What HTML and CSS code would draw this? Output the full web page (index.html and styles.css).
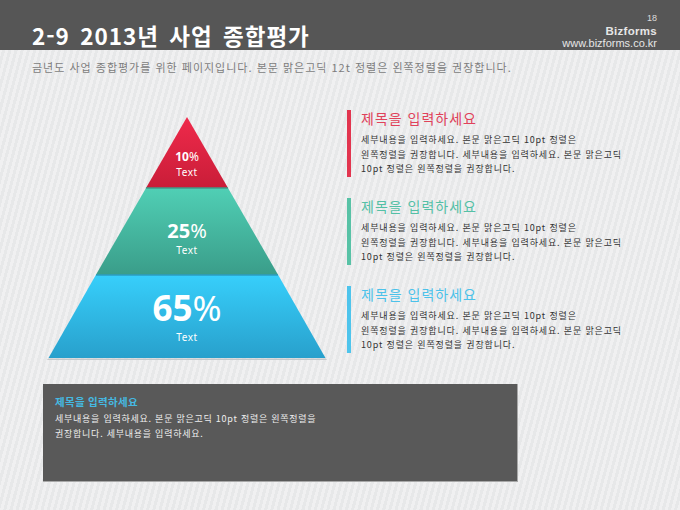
FILE: index.html
```html
<!DOCTYPE html>
<html lang="ko">
<head>
<meta charset="utf-8">
<link rel="stylesheet" href="styles.css">
</head>
<body>
<div class="page">
  <header class="header">
    <h1 class="title">2-9 2013년 사업 종합평가</h1>
    <div class="brand">
      <div class="pageno">18</div>
      <div class="bizname">Bizforms</div>
      <div class="bizurl">www.bizforms.co.kr</div>
    </div>
  </header>
  <p class="subtitle">금년도 사업 종합평가를 위한 페이지입니다. 본문 맑은고딕 12t 정렬은 왼쪽정렬을 권장합니다.</p>
  <div class="main">
    <svg class="pyramid" width="300" height="260" viewBox="0 0 300 260">
      <defs>
        <linearGradient id="gRed" x1="0" y1="0" x2="0" y2="1">
          <stop offset="0" stop-color="#ef2a4b"/>
          <stop offset="1" stop-color="#c91d38"/>
        </linearGradient>
        <linearGradient id="gTeal" x1="0" y1="0" x2="0" y2="1">
          <stop offset="0" stop-color="#50cfb5"/>
          <stop offset="1" stop-color="#3a9d89"/>
        </linearGradient>
        <linearGradient id="gBlue" x1="0" y1="0" x2="0" y2="1">
          <stop offset="0" stop-color="#37cffb"/>
          <stop offset="1" stop-color="#28a0cc"/>
        </linearGradient>
      </defs>
      <polygon points="8,248.5 286,248.5 287,250 7,250" fill="#c5c9cc"/>
      <polygon points="147,7 188,78 106,78" fill="url(#gRed)"/>
      <polygon points="106,78 188,78 238.2,165 55.8,165" fill="url(#gTeal)"/>
      <polygon points="55.8,165 238.2,165 285.5,248 8.5,248" fill="url(#gBlue)"/>
      <line x1="106" y1="78" x2="188" y2="78" stroke="#3f9a88" stroke-width="1.5"/>
      <line x1="56" y1="165" x2="238" y2="165" stroke="#2c9cc0" stroke-width="1.5"/>
      <g class="ptext" fill="#ffffff" text-anchor="middle">
        <text x="147" y="51" class="p10">10<tspan class="pct">%</tspan></text>
        <text x="147" y="66" class="plabel">Text</text>
        <text x="147" y="128" class="p25">25<tspan class="pct">%</tspan></text>
        <text x="147" y="144" class="plabel">Text</text>
        <text x="147" y="211" class="p65">65<tspan class="pct">%</tspan></text>
        <text x="147" y="231" class="plabel">Text</text>
      </g>
    </svg>
    <div class="items">
      <div class="item item-red">
        <div class="item-title">제목을 입력하세요</div>
        <div class="item-body">세부내용을 입력하세요. 본문 맑은고딕 10pt 정렬은<br>왼쪽정렬을 권장합니다. 세부내용을 입력하세요. 본문 맑은고딕<br>10pt 정렬은 왼쪽정렬을 권장합니다.</div>
      </div>
      <div class="item item-teal">
        <div class="item-title">제목을 입력하세요</div>
        <div class="item-body">세부내용을 입력하세요. 본문 맑은고딕 10pt 정렬은<br>왼쪽정렬을 권장합니다. 세부내용을 입력하세요. 본문 맑은고딕<br>10pt 정렬은 왼쪽정렬을 권장합니다.</div>
      </div>
      <div class="item item-blue">
        <div class="item-title">제목을 입력하세요</div>
        <div class="item-body">세부내용을 입력하세요. 본문 맑은고딕 10pt 정렬은<br>왼쪽정렬을 권장합니다. 세부내용을 입력하세요. 본문 맑은고딕<br>10pt 정렬은 왼쪽정렬을 권장합니다.</div>
      </div>
    </div>
  </div>
  <div class="note">
    <div class="note-title">제목을 입력하세요</div>
    <div class="note-body">세부내용을 입력하세요. 본문 맑은고딕 10pt 정렬은 왼쪽정렬을<br>권장합니다. 세부내용을 입력하세요.</div>
  </div>
</div>
</body>
</html>
```

FILE: styles.css
```css
* { box-sizing: border-box; }
html, body { margin: 0; padding: 0; }
body {
  width: 680px;
  height: 510px;
  overflow: hidden;
  font-family: "Noto Sans CJK KR", "Noto Sans", sans-serif;
  background-color: #ececed;
  background-image: repeating-linear-gradient(105deg, #f0f0f1 0 3px, #e7e8e9 3px 6px);
}
.page { width: 680px; height: 510px; }
.header {
  height: 50px;
  background: #565656;
  display: flex;
  justify-content: space-between;
  align-items: flex-end;
  padding: 0 23px 0 32px;
}
.title {
  margin: 0 0 1px 0;
  color: #ffffff;
  font-size: 22.5px;
  font-weight: 700;
  line-height: 28px;
  letter-spacing: 1px;
  word-spacing: 3px;
}
.brand {
  text-align: right;
  color: #e6e6e6;
  padding-bottom: 1px;
  font-family: "Liberation Sans", "Noto Sans", sans-serif;
}
.pageno { font-size: 9px; line-height: 10px; color: #dddddd; margin-bottom: 2px; }
.bizname { font-size: 11.5px; font-weight: 700; line-height: 12px; letter-spacing: 0.3px; margin-bottom: 1px; }
.bizurl { font-size: 11px; line-height: 11px; letter-spacing: 0; }
.subtitle {
  margin: 10px 0 0 32px;
  font-size: 11px;
  line-height: 14px;
  color: #7d7d7d;
  letter-spacing: 1px;
  white-space: nowrap;
}
.main {
  display: flex;
  margin-top: 36px;
}
.pyramid { display: block; margin-left: 40px; flex: none; }
.ptext { font-family: "Noto Sans", "Open Sans", sans-serif; }
.p10 { font-size: 12px; font-weight: 700; }
.p25 { font-size: 20px; font-weight: 700; }
.p65 { font-size: 35px; font-weight: 700; }
.pct { font-weight: 400; }
.plabel { font-size: 10px; letter-spacing: 0.6px; }
.items {
  display: flex;
  flex-direction: column;
  gap: 21px;
  margin-left: 7px;
}
.item {
  border-left: 4px solid;
  padding-left: 10px;
  height: 67px;
}
.item-red { border-color: #e2354f; }
.item-teal { border-color: #58c2a6; }
.item-blue { border-color: #4ec4ec; }
.item-title {
  font-size: 14px;
  line-height: 16px;
  letter-spacing: 1px;
}
.item-red .item-title { color: #e0425a; }
.item-teal .item-title { color: #54c0a6; }
.item-blue .item-title { color: #4cc2ea; }
.item-body {
  margin-top: 7px;
  font-size: 9px;
  line-height: 14.5px;
  letter-spacing: 0.85px;
  color: #333333;
  white-space: nowrap;
}
.note {
  margin: 14px 0 0 43px;
  width: 475px;
  height: 98px;
  background: #595959;
  border-right: 1px solid #a8a8a8;
  border-bottom: 1px solid #a8a8a8;
  padding: 11px 0 0 12px;
}
.note-title {
  color: #45b9e2;
  font-size: 10.5px;
  line-height: 14px;
  font-weight: 700;
  letter-spacing: 0.3px;
}
.note-body {
  margin-top: 3px;
  color: #eeeeee;
  font-size: 9px;
  line-height: 14.5px;
  letter-spacing: 0.75px;
  white-space: nowrap;
}
```
